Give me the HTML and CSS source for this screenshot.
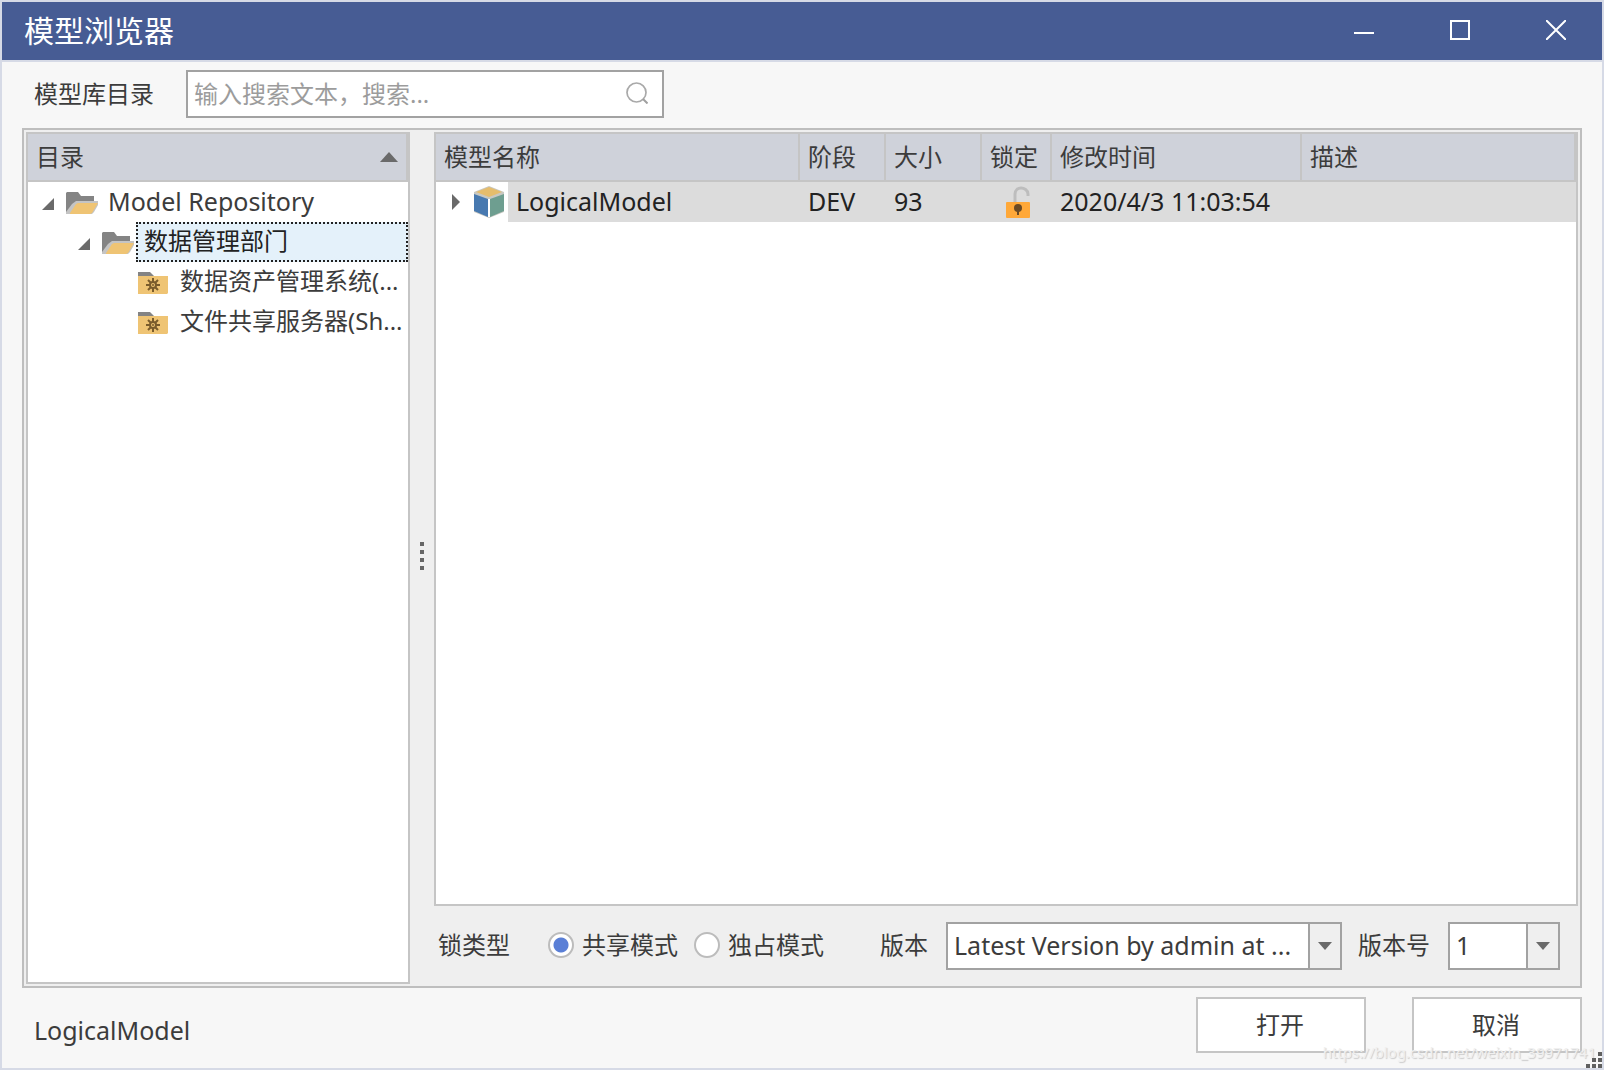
FILE: index.html
```html
<!DOCTYPE html>
<html lang="zh-CN">
<head>
<meta charset="utf-8">
<title>模型浏览器</title>
<link rel="stylesheet" href="styles.css">
</head>
<body>
<svg class="defs" width="0" height="0" aria-hidden="true">
  <symbol id="folder-open" viewBox="0 0 32 22">
    <path d="M0 22V1l1-1h11l3 4h13v6H13l-4 2-6 9z" fill="#848484"/>
    <path d="M0 22v-2l6-8 4-3h22v4l-4 7-2 2z" fill="#c4c4c4"/>
    <path d="M4 22v-1l6-9 2-1h20l-6 10-2 1z" fill="#efc474"/>
  </symbol>
  <symbol id="folder-gear" viewBox="0 0 30 22">
    <path d="M0 4V0h12l4 4z" fill="#848484"/>
    <path d="M0 4h30v17l-1 1H0z" fill="#efc474"/>
    <path d="M15 6v14M8 13h14M10 8l10 10M20 8L10 18" stroke="#7a5c2c" stroke-width="2"/>
    <circle cx="15" cy="13" r="3" fill="#efc474" stroke="#7a5c2c" stroke-width="2"/>
    <circle cx="15" cy="13" r="1" fill="#7a5c2c"/>
  </symbol>
  <symbol id="expanded" viewBox="0 0 12 12"><path d="M12 0v12H0z" fill="#6a6a6a"/></symbol>
</svg>
<div class="window">
  <header class="titlebar">
    <h1 class="title">模型浏览器</h1>
    <div class="window-buttons">
      <button class="window-button" type="button" aria-label="最小化"><svg width="20" height="20" viewBox="0 0 20 20"><path d="M0 13h20" stroke="#fff" stroke-width="2"/></svg></button>
      <button class="window-button" type="button" aria-label="最大化"><svg width="20" height="20" viewBox="0 0 20 20"><path d="M1 1h18v18H1z" fill="none" stroke="#fff" stroke-width="2"/></svg></button>
      <button class="window-button" type="button" aria-label="关闭"><svg width="20" height="20" viewBox="0 0 20 20"><path d="M0 0l20 20M20 0L0 20" stroke="#fff" stroke-width="2"/></svg></button>
    </div>
  </header>

  <div class="toolbar">
    <label class="toolbar-label" for="search">模型库目录</label>
    <div class="search">
      <input class="search-input" id="search" type="text" placeholder="输入搜索文本，搜索...">
      <svg class="search-icon" width="22" height="22" viewBox="0 0 22 22"><circle cx="10.500" cy="10.500" r="9.500" fill="none" stroke="#a9a9a9" stroke-width="1.700"/><path d="M17 17l4.500 4.500" stroke="#a0a0a0" stroke-width="2"/></svg>
    </div>
  </div>

  <main class="frame">
    <section class="panel tree-panel">
      <div class="tree-header">
        <span>目录</span>
        <svg width="18" height="10" viewBox="0 0 18 10"><path d="M9 0l9 10H0z" fill="#6a6a6a"/></svg>
      </div>
      <ul class="tree" role="tree">
        <li role="treeitem" aria-expanded="true">
          <div class="node">
            <svg class="twisty" width="12" height="12"><use href="#expanded"/></svg>
            <svg class="node-icon" width="32" height="22"><use href="#folder-open"/></svg>
            <span class="node-text latin">Model Repository</span>
          </div>
          <ul class="tree-group" role="group">
            <li role="treeitem" aria-expanded="true" aria-selected="true">
              <div class="node">
                <svg class="twisty" width="12" height="12"><use href="#expanded"/></svg>
                <svg class="node-icon" width="32" height="22"><use href="#folder-open"/></svg>
                <span class="node-text selected">数据管理部门</span>
              </div>
              <ul class="tree-group" role="group">
                <li role="treeitem"><div class="node"><span class="twisty-space"></span><svg class="node-icon" width="30" height="22"><use href="#folder-gear"/></svg><span class="node-text">数据资产管理系统(...</span></div></li>
                <li role="treeitem"><div class="node"><span class="twisty-space"></span><svg class="node-icon" width="30" height="22"><use href="#folder-gear"/></svg><span class="node-text">文件共享服务器(Sh...</span></div></li>
              </ul>
            </li>
          </ul>
        </li>
      </ul>
    </section>

    <div class="splitter" role="separator" aria-orientation="vertical">
      <i class="splitter-dot"></i><i class="splitter-dot"></i><i class="splitter-dot"></i><i class="splitter-dot"></i>
    </div>

    <section class="detail">
      <div class="panel table-panel">
        <table class="models">
          <colgroup><col class="col-name"><col class="col-stage"><col class="col-size"><col class="col-lock"><col class="col-time"><col></colgroup>
          <thead><tr><th>模型名称</th><th>阶段</th><th>大小</th><th>锁定</th><th>修改时间</th><th>描述</th></tr></thead>
          <tbody>
            <tr>
              <td class="name-cell">
                <div class="name">
                  <span class="name-icons">
                    <svg width="8" height="16" viewBox="0 0 8 16"><path d="M0 0l8 8-8 8z" fill="#6a6a6a"/></svg>
                    <svg width="30" height="32" viewBox="0 0 30 32"><path d="M15 0l15 6v20l-15 6-15-6V6z" fill="#c8c8c2"/><path d="M15 1l13 5-13 5L2 6z" fill="#e6bd6c"/><path d="M0 8l14 5v18L0 25z" fill="#4779b0"/><path d="M30 8l-14 5v18l14-6z" fill="#6e9e90"/><path d="M15 13v18" stroke="#fff" stroke-width="2"/></svg>
                  </span>
                  <span class="name-text">LogicalModel</span>
                </div>
              </td>
              <td>DEV</td>
              <td>93</td>
              <td class="lock-cell"><svg class="lock" width="24" height="32" viewBox="0 0 24 32"><path d="M9 16V8c0-4 3-6 6-6s7 2 7 6v2" fill="none" stroke="#bdbdbd" stroke-width="3"/><rect y="16" width="24" height="16" rx="1" fill="#ffa838"/><circle cx="12" cy="22" r="4" fill="#6b4a24"/><path d="M11 24h2v5h-2z" fill="#6b4a24"/></svg></td>
              <td>2020/4/3 11:03:54</td>
              <td></td>
            </tr>
          </tbody>
        </table>
      </div>
      <form class="options">
        <fieldset class="lock-type">
          <legend class="legend">锁类型</legend>
          <label class="radio"><input class="radio-input" type="radio" name="lock" checked>共享模式</label>
          <label class="radio"><input class="radio-input" type="radio" name="lock">独占模式</label>
        </fieldset>
        <label class="version-label" for="version">版本</label>
        <div class="select version">
          <select class="select-input" id="version"><option>Latest Version by admin at ...</option></select>
          <span class="select-arrow"><svg width="14" height="8" viewBox="0 0 14 8"><path d="M0 0h14L7 8z" fill="#6a6a6a"/></svg></span>
        </div>
        <label for="number">版本号</label>
        <div class="select number">
          <select class="select-input" id="number"><option>1</option></select>
          <span class="select-arrow"><svg width="14" height="8" viewBox="0 0 14 8"><path d="M0 0h14L7 8z" fill="#6a6a6a"/></svg></span>
        </div>
      </form>
    </section>
  </main>

  <footer class="footer">
    <span class="latin">LogicalModel</span>
    <div class="actions">
      <button class="button" type="button">打开</button>
      <button class="button" type="button">取消</button>
    </div>
  </footer>
  <span class="watermark">https://blog.csdn.net/weixin_39971741</span>
  <svg class="grip" width="16" height="16" viewBox="0 0 16 16"><path d="M12 0h4v4h-4zM6 6h4v4H6zM12 6h4v4h-4zM0 12h4v4H0zM6 12h4v4H6zM12 12h4v4h-4z" fill="#606060"/></svg>
</div>
</body>
</html>
```
FILE: styles.css
```css
* { box-sizing: border-box; }

body {
  margin: 0;
  color: #3c3c3c;
  font: 24px/32px "Noto Sans", "Noto Sans CJK SC", sans-serif;
}

button, input, select { font: inherit; color: inherit; }
svg { display: block; flex: none; }
.defs { position: absolute; }
.latin { font-size: 25px; }

.window {
  position: relative;
  display: flex;
  flex-direction: column;
  min-height: 100vh;
  border: 2px solid #d6dae6;
  background: #f7f7f7;
}

/* Title bar */
.titlebar {
  display: flex;
  justify-content: space-between;
  height: 60px;
  padding-left: 22px;
  border-bottom: 2px solid #d6dae6;
  background: #475c94;
  color: #fff;
}
.title { margin: 0; font-size: 30px; font-weight: 400; line-height: 58px; }
.window-buttons { display: flex; }
.window-button {
  display: grid;
  place-items: center start;
  width: 96px;
  padding: 0 0 2px 40px;
  border: 0;
  background: none;
}

/* Search row */
.toolbar { display: flex; align-items: center; padding: 8px 32px 10px; }
.toolbar-label { width: 152px; }
.search { position: relative; width: 478px; }
.search-input {
  display: block;
  width: 100%;
  height: 48px;
  padding: 0 48px 2px 6px;
  border: 2px solid #a2a2a2;
  background: #fff;
}
.search-input::placeholder { color: #9c9c9c; opacity: 1; }
.search-icon { position: absolute; top: 12px; right: 16px; }

/* Main frame */
.frame {
  flex: 1;
  display: grid;
  grid-template-columns: 384px 24px 1fr;
  margin: 0 20px;
  padding: 2px;
  border: 2px solid #bebebe;
  background: #efefef;
}
.panel { border: 2px solid #c5c5c5; background: #fff; }

/* Directory tree */
.tree-header {
  display: flex;
  justify-content: space-between;
  align-items: center;
  height: 48px;
  padding: 0 8px;
  border-right: 2px solid #c5c5c5;
  border-bottom: 2px solid #c5c5c5;
  background: #cfd2da;
}
.tree, .tree-group { margin: 0; padding: 0; list-style: none; }
.tree { padding-left: 14px; }
.tree-group { padding-left: 36px; }
.node { display: flex; align-items: center; height: 40px; }
.twisty, .twisty-space { width: 12px; margin-right: 12px; }
.twisty { margin-top: 4px; }
.node-icon { margin-top: 2px; }
.twisty + .node-icon { margin-right: 2px; }
.twisty-space + .node-icon { margin-right: 4px; }
.node-text {
  flex: 1;
  height: 40px;
  padding-left: 6px;
  border: 2px solid transparent;
  line-height: 34px;
  white-space: nowrap;
}
.selected { border: 2px dotted #222; background: #e4f1fa; color: #222; }

/* Splitter */
.splitter {
  display: flex;
  flex-direction: column;
  justify-content: center;
  align-items: center;
  gap: 4px;
  padding-bottom: 4px;
}
.splitter-dot { width: 4px; height: 4px; background: #666; }

/* Model table */
.detail { display: flex; flex-direction: column; min-width: 0; }
.table-panel { flex: 1; }
.models { width: 100%; table-layout: fixed; border-spacing: 0; }
.col-name { width: 364px; }
.col-stage { width: 86px; }
.col-size { width: 96px; }
.col-lock { width: 70px; }
.col-time { width: 250px; }
.models th {
  height: 48px;
  padding: 0 8px;
  border-right: 2px solid #c5c5c5;
  border-bottom: 2px solid #c5c5c5;
  background: #cfd2da;
  font-weight: 400;
  text-align: left;
}
.models td {
  height: 40px;
  padding: 0 8px 2px;
  background: #dcdcdc;
  color: #222;
  font-size: 25px;
  white-space: nowrap;
}
.models .name-cell { padding: 0; }
.name { display: flex; }
.name-icons {
  display: flex;
  align-items: center;
  gap: 14px;
  width: 72px;
  height: 40px;
  padding-left: 16px;
  background: #fff;
}
.name-text { padding-left: 8px; line-height: 38px; }
.models .lock-cell { padding: 0 0 0 2px; }
.lock { margin: 0 auto; }

/* Lock type and version */
.options { display: flex; align-items: center; height: 78px; padding: 0 18px 0 4px; }
.lock-type { display: flex; align-items: center; margin: 0; padding: 0; border: 0; }
.legend { float: left; width: 110px; padding: 0; }
.radio { display: flex; align-items: center; gap: 8px; margin-right: 16px; white-space: nowrap; }
.radio-input {
  appearance: none;
  width: 26px;
  height: 26px;
  margin: 0;
  border: 2px solid #bcbcbc;
  border-radius: 50%;
  background: #fff;
}
.radio-input:checked { background: radial-gradient(circle, #5a7fd6 7px, #fff 8px); }
.version-label { margin-left: auto; }
.select { position: relative; height: 48px; margin-top: 2px; }
.version { width: 396px; margin-right: 16px; margin-left: 18px; }
.number { width: 112px; margin-left: 18px; }
.select-input {
  appearance: none;
  display: block;
  width: 100%;
  height: 48px;
  padding: 0 32px 2px 6px;
  border: 2px solid #a2a2a2;
  border-radius: 0;
  background: #fff;
  font-size: 25px;
}
.select-arrow {
  position: absolute;
  inset: 2px 2px 2px auto;
  display: grid;
  place-items: center;
  width: 32px;
  border-left: 2px solid #a2a2a2;
  background: #efefef;
  pointer-events: none;
}

/* Footer */
.footer {
  display: flex;
  justify-content: space-between;
  align-items: center;
  height: 80px;
  padding: 4px 20px 0 32px;
}
.actions { display: flex; gap: 46px; padding-bottom: 10px; }
.button {
  width: 170px;
  height: 56px;
  padding: 0 2px 0 0;
  border: 2px solid #c5c5c5;
  background: #fff;
}
.watermark {
  position: absolute;
  right: 6px;
  bottom: 0;
  color: #f0f0f0;
  font-size: 15px;
  text-shadow: 1px 1px 1px #cacaca;
  pointer-events: none;
}
.grip { position: absolute; right: 0; bottom: 0; }
```
